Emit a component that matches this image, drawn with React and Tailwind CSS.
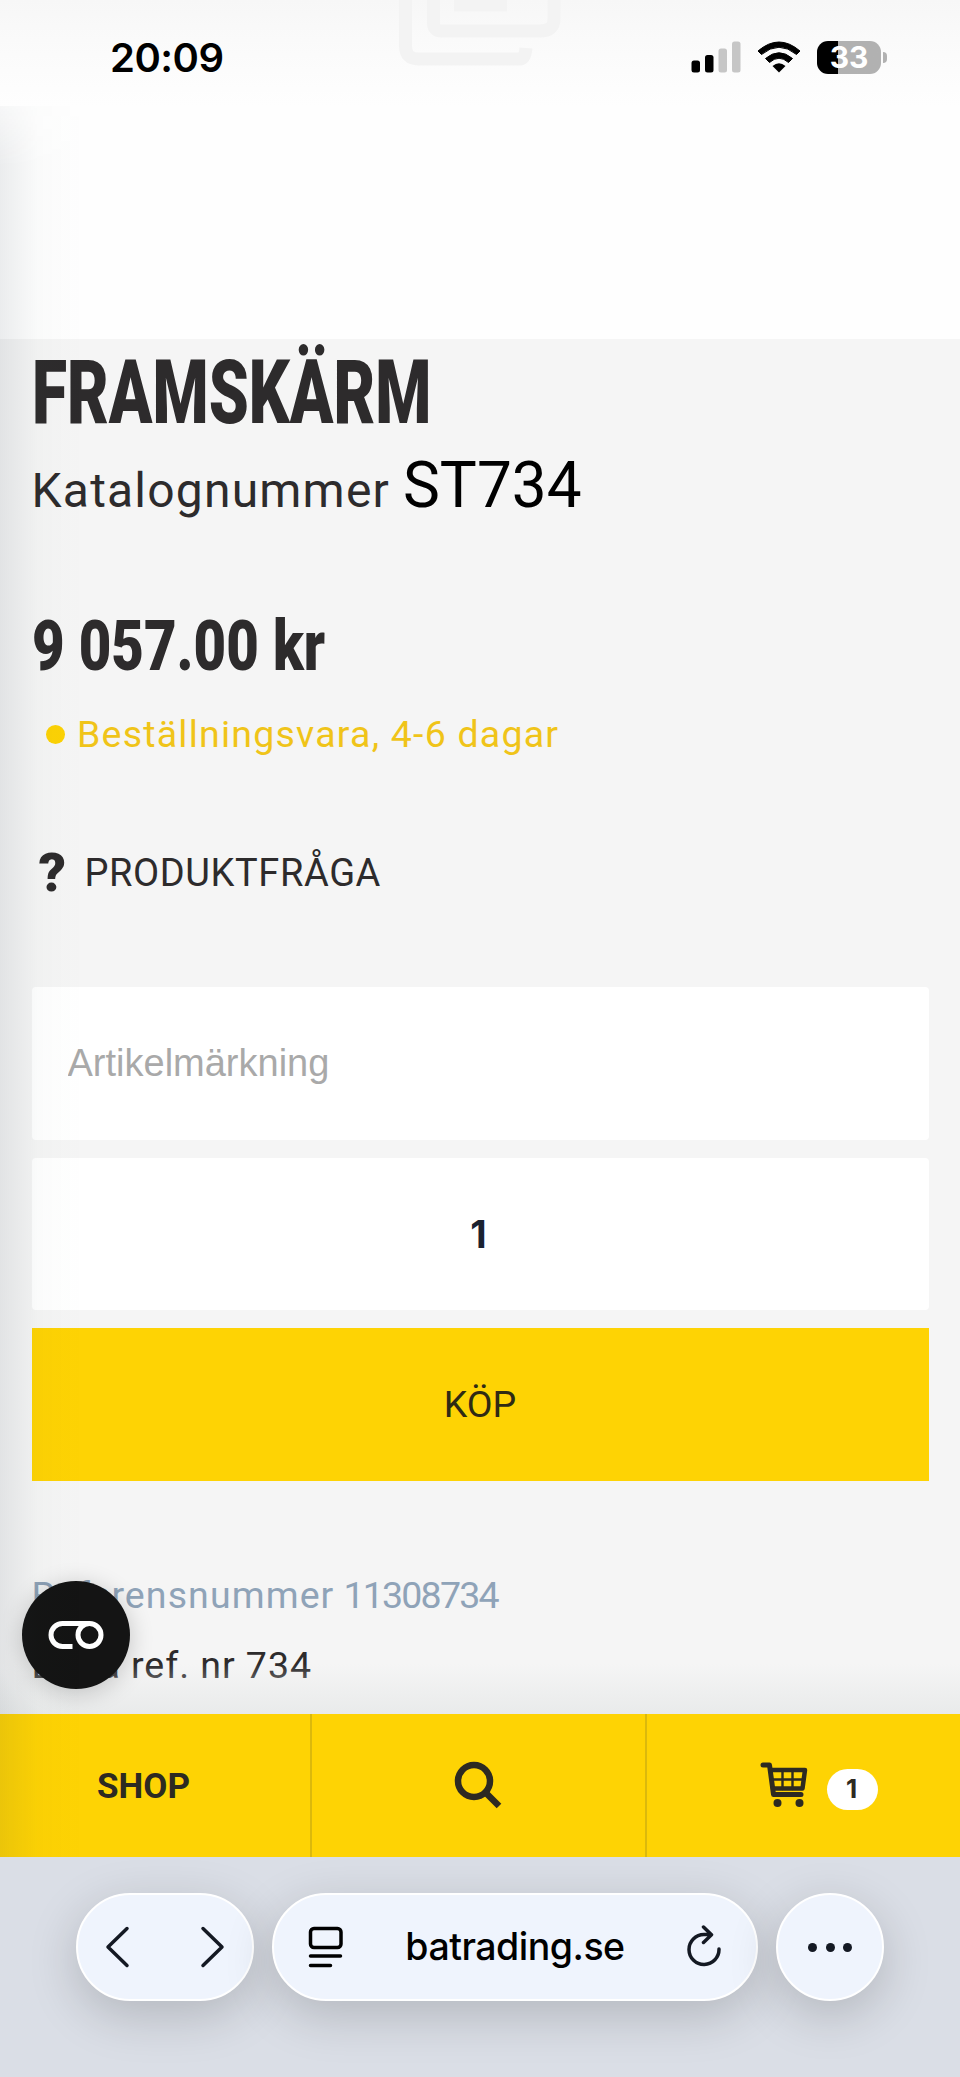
const INK = 'text-[#2d2b2c]';

// Roboto stands in for Barlow, each line is fitted to its own width
function Line({ children, className }) {
  return (
    <span className={`inline-block origin-left whitespace-pre font-['Roboto',sans-serif] ${className}`}>
      {children}
    </span>
  );
}

function StatusBar() {
  return (
    <header className="relative z-10 h-[106px] bg-gradient-to-b from-[#f7f7f7] via-[#fbfbfb] to-[#fefefe]">
      <svg className="absolute left-[398px] top-0" width="164" height="68" fill="none" stroke="#f3f3f3" strokeWidth="13">
        <path d="M7.500 0V46q0 13 13 13H122q5 0 6-11" />
        <path d="M35.500 0V23q0 8 8 8H142q14 0 14-12V0" />
        <path d="M56 5H109" />
      </svg>
      <div className="relative flex items-center pl-[110px] pr-[73px] h-[114px]">
        <span className="pt-[1px] text-[40px] leading-none font-semibold text-black font-['Inter',sans-serif] tracking-[-0.5px]">20:09</span>
        <div className="ml-auto flex items-center">
          <svg width="50" height="32" viewBox="0 0 50 32">
            <rect x="0.500" y="19.500" width="8.500" height="12" rx="2.500" />
            <rect x="14" y="14" width="8.500" height="17.500" rx="2.500" />
            <rect x="27.500" y="7.500" width="8.500" height="24" rx="2.500" fill="#c6c6c6" />
            <rect x="41" y="0.500" width="8.500" height="31" rx="2.500" fill="#c6c6c6" />
          </svg>
          <svg className="ml-[16px]" width="44" height="32" viewBox="0 0 44 32">
            <path d="M1 10Q22 -8 43 10L39.500 13.500Q22 -1 4.500 13.500Z" stroke="#000" strokeLinejoin="round" />
            <path d="M8.500 17.500Q22 6 35.500 17.500L31.500 21.500Q22 13 12.500 21.500Z" stroke="#000" strokeLinejoin="round" />
            <path d="M15.500 25Q22 19.500 28.500 25L22 31.500Z" />
          </svg>
          <div className="ml-[16px] w-[64px] h-[33px] rounded-[11px] bg-gradient-to-r from-black from-33% to-[#b1b1b1] to-33% flex items-center justify-center text-white font-bold text-[30px] leading-none font-['Inter',sans-serif]">
            33
          </div>
          <span className="ml-[2px] w-[4px] h-[11px] rounded-r-full bg-[#b1b1b1]" />
        </div>
      </div>
    </header>
  );
}

function Product() {
  return (
    <main className={`relative h-[1375px] bg-[#f5f5f5] px-[31.500px] overflow-hidden ${INK}`}>
      <h1 className="h-[109px] pt-[4px]">
        <Line className="text-[89px] leading-[100px] font-black scale-x-[0.72]">FRAMSKÄRM</Line>
      </h1>
      <p className="flex items-baseline h-[90px] leading-[76px]">
        <Line className="text-[48px] w-[371px] tracking-[1.2px]">Katalognummer</Line>
        <Line className="text-[64px] text-black scale-x-[0.97]">ST734</Line>
      </p>
      <p className="mt-[58px] h-[100px]">
        <Line className="text-[71px] leading-[100px] font-black scale-x-[0.793]">9 057.00 kr</Line>
      </p>
      <p className="mt-[8px] flex items-center h-[60px] pl-[14.500px]">
        <span className="size-[19px] rounded-full bg-[#fcd205]" />
        <Line className="ml-[12px] text-[37.500px] tracking-[1.22px] text-[#f0c419]">Beställningsvara, 4-6 dagar</Line>
      </p>
      <p className="mt-[79px] flex items-center h-[60px] pl-[7px]">
        <Line className="w-[46px] text-[54px] font-black leading-none">?</Line>
        <Line className="text-[38px] tracking-[0.6px]">PRODUKTFRÅGA</Line>
      </p>
      <form className="mt-[84px] flex flex-col gap-[18px]">
        <input
          placeholder="Artikelmärkning"
          className="h-[152.500px] rounded-[4px] bg-white px-[36px] text-[38px] font-['Liberation_Sans',sans-serif] placeholder:text-[#a9a9a9]"
        />
        <input
          defaultValue="1"
          className="h-[152.500px] rounded-[4px] bg-white pr-[3px] text-center text-[38px] font-bold text-[#1b2230] font-['Inter',sans-serif]"
        />
        <button type="button" className="h-[152.500px] bg-[#fed304] text-[#2f2a14]">
          <Line className="text-[37.500px]">KÖP</Line>
        </button>
      </form>
      <p className="mt-[79.500px] h-[70px] flex text-[#8fa3b8]">
        <Line className="w-[312px] text-[37.500px] leading-[70px] tracking-[1.1px]">Referensnummer</Line>
        <Line className="text-[37.500px] leading-[70px] tracking-[-1.8px]">11308734</Line>
      </p>
      <p className="h-[70px]">
        <Line className="text-[37.500px] leading-[70px] tracking-[0.95px]">Extra ref. nr 734</Line>
      </p>
      <div className="absolute inset-x-0 bottom-0 h-[50px] bg-gradient-to-b from-transparent to-[#e6e8e8]/80" />
      <div className="absolute left-[22px] bottom-[25px] size-[108px] rounded-full bg-[#141414] shadow-[0_4px_24px_rgba(0,0,0,0.2)] flex items-center justify-center">
        <svg width="56" height="30" viewBox="0 0 56 30" fill="none" stroke="#fff" strokeWidth="5">
          <path d="M24.500 26.500H14.500A11.500 11.500 0 0 1 14.500 3.500H42" />
          <circle cx="41.500" cy="15" r="11.500" />
        </svg>
      </div>
    </main>
  );
}

function ShopBar() {
  return (
    <nav className="flex h-[143px] bg-[#fed304] text-[#2d2a22]">
      <div className="w-[312px] border-r-2 border-[#dbb90c] flex items-center pl-[97px] pt-[4px]">
        <Line className="text-[35px] font-bold">SHOP</Line>
      </div>
      <div className="w-[335px] border-r-2 border-[#dbb90c] pl-[142px] pt-[47px]">
        <svg width="48" height="48" viewBox="0 0 48 48" fill="none" stroke="currentColor" strokeWidth="6.500">
          <circle cx="20" cy="20" r="16" />
          <path d="M31 31L45 45" />
        </svg>
      </div>
      <div className="flex-1 flex pl-[112px] pt-[47px]">
        <svg width="50" height="46" viewBox="0 0 50 46" fill="none" stroke="currentColor" strokeLinecap="round" strokeLinejoin="round">
          <path d="M4 4H10.500L14.500 33.500H42" strokeWidth="5" />
          <path d="M12 9H46L43.500 27.500H14" strokeWidth="4.500" />
          <path d="M13 18.500H45M23.500 9V28M33.500 9V28" strokeWidth="2.400" />
          <circle cx="18.500" cy="42" r="4" fill="currentColor" stroke="none" />
          <circle cx="40.500" cy="42" r="4" fill="currentColor" stroke="none" />
        </svg>
        <span className="ml-[18px] mt-[7.500px] w-[51px] h-[41px] pr-[2px] rounded-full bg-white flex items-center justify-center text-[26px] font-bold leading-none font-['Inter',sans-serif]">
          1
        </span>
      </div>
    </nav>
  );
}

function BrowserBar() {
  const pill = 'h-[108px] rounded-full bg-[#eff4fd] border-2 border-white shadow-[0_14px_50px_rgba(0,0,0,0.18)] flex items-center';
  return (
    <footer className="h-[220px] bg-[#dadee6] pt-[36px] pl-[76px] flex items-start gap-[18px] overflow-hidden">
      <div className={`${pill} w-[178px] px-[26px] justify-between`}>
        <svg width="28" height="44" viewBox="0 0 28 44" fill="none" stroke="#141923" strokeWidth="3.500" strokeLinecap="round" strokeLinejoin="round">
          <path d="M23 3.500L4 22L23 40.500" />
        </svg>
        <svg width="28" height="44" viewBox="0 0 28 44" fill="none" stroke="#141923" strokeWidth="3.500" strokeLinecap="round" strokeLinejoin="round">
          <path d="M5 3.500L24 22L5 40.500" />
        </svg>
      </div>
      <div className={`${pill} w-[486px] pl-[34px] pr-[34px] justify-between`}>
        <svg width="36" height="42" viewBox="0 0 36 42" fill="none" stroke="#000" strokeWidth="3.500" strokeLinecap="round">
          <rect x="2.500" y="2.500" width="30.500" height="19" rx="3.500" />
          <path d="M2.500 30H32.500M2.500 39.500H22.500" />
        </svg>
        <span className="text-[37.500px] font-medium text-black font-['Inter',sans-serif] tracking-[-0.5px]">batrading.se</span>
        <svg width="36" height="44" viewBox="0 0 36 44" fill="none" stroke="#141923" strokeWidth="3.500" strokeLinecap="round" strokeLinejoin="round">
          <path d="M33 24A15 15 0 1 1 18 9.500H24.500M17.500 2L25.500 9.800L17.500 17.500" />
        </svg>
      </div>
      <div className={`${pill} w-[108px] justify-center gap-[8.500px]`}>
        <span className="size-[9px] rounded-full bg-[#141923]" />
        <span className="size-[9px] rounded-full bg-[#141923]" />
        <span className="size-[9px] rounded-full bg-[#141923]" />
      </div>
    </footer>
  );
}

export default function App() {
  return (
    <div className="relative w-[960px] h-[2077px] overflow-hidden bg-[#fefefe]">
      <StatusBar />
      <div className="h-[233px]" />
      <Product />
      <ShopBar />
      <BrowserBar />
      {/* edge shadow of the off-canvas menu */}
      <div className="absolute left-0 top-[106px] h-[1751px] w-[84px] bg-gradient-to-r from-[#2a3a4a]/9 via-[#2a4a3a]/2 via-45% to-transparent [mask-image:linear-gradient(to_bottom,rgba(0,0,0,0.4),#000_60px)]" />
    </div>
  );
}
